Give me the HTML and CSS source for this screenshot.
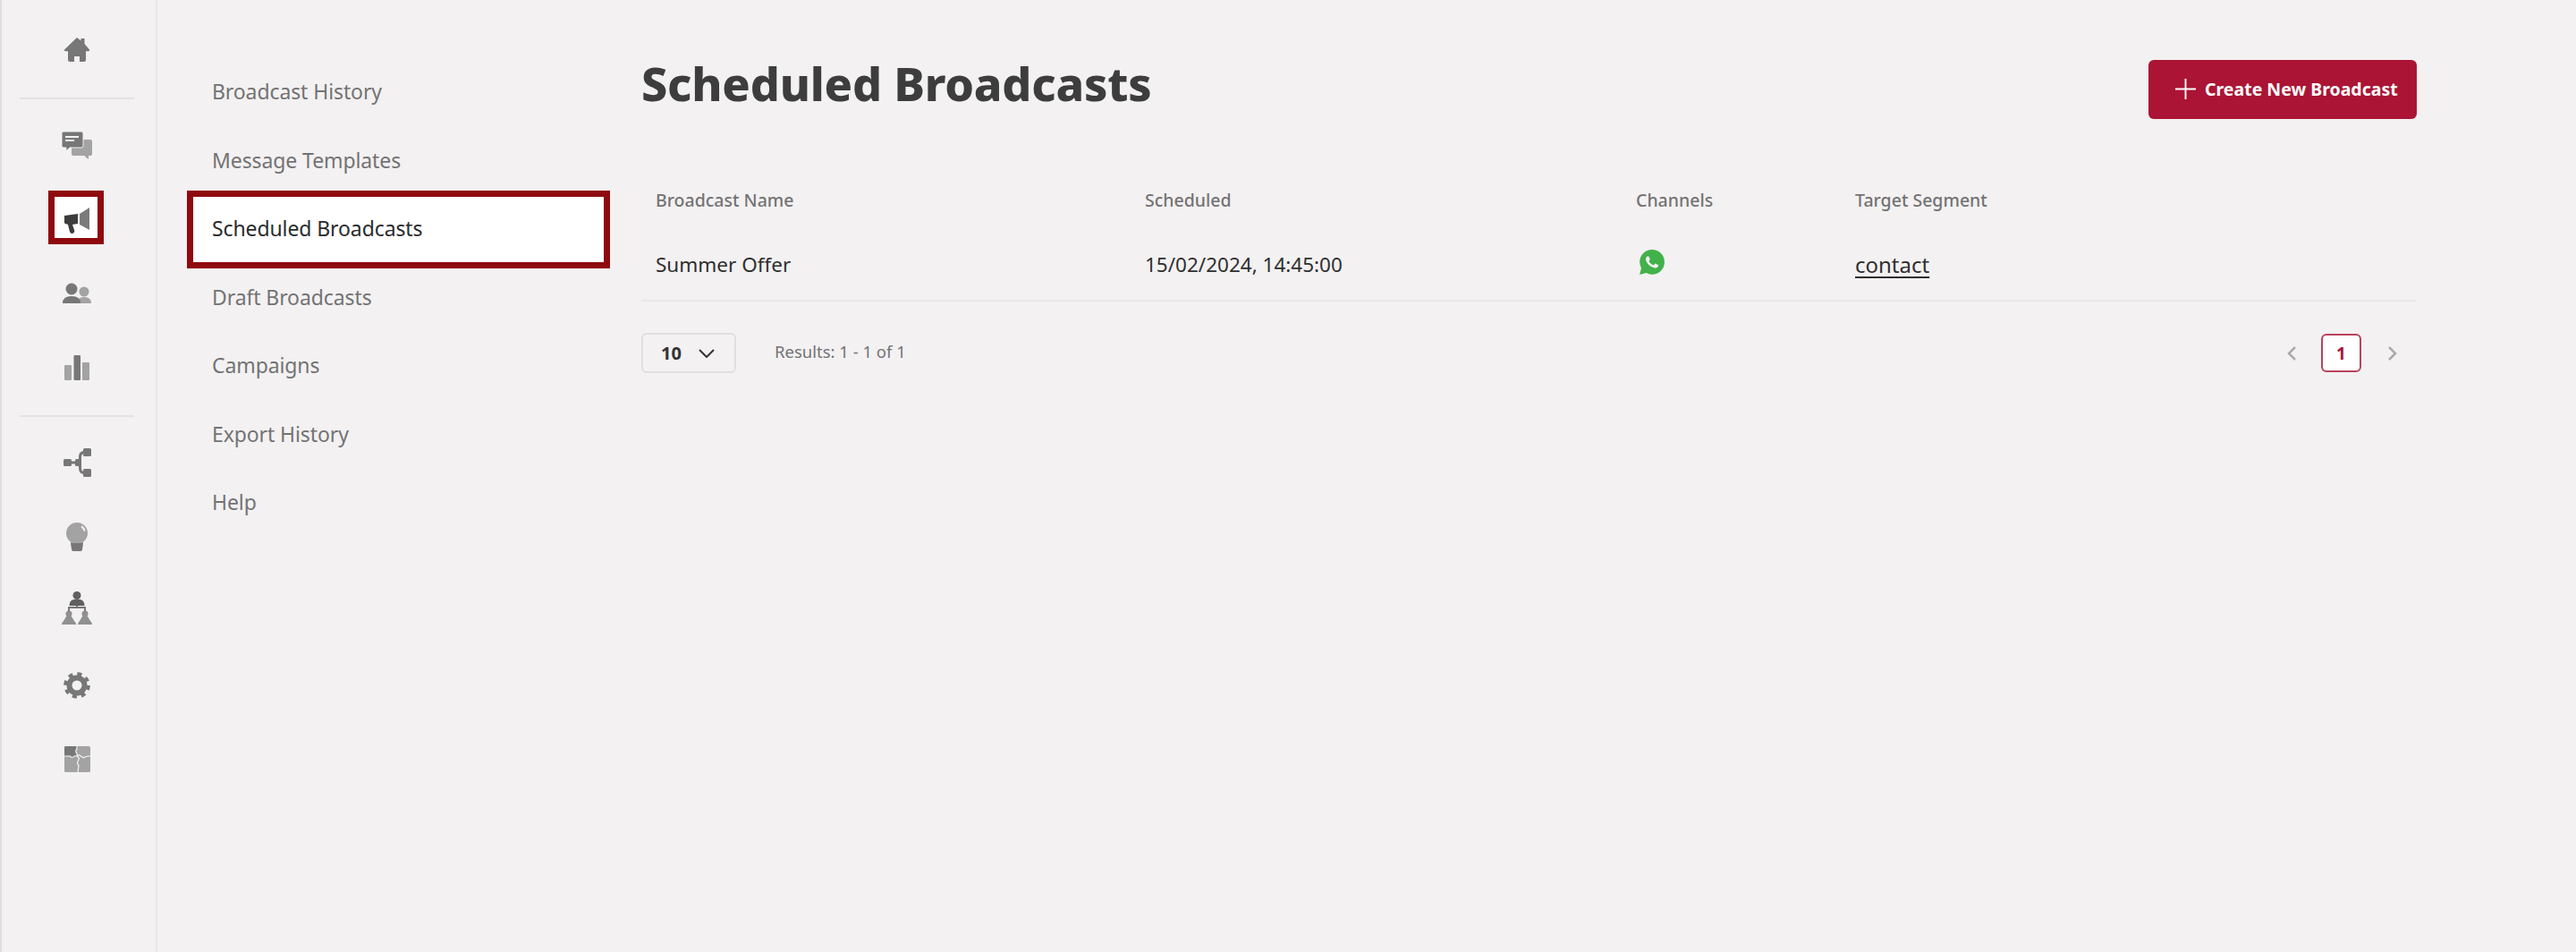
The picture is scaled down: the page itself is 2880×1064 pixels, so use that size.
FILE: index.html
```html
<!DOCTYPE html>
<html lang="en">
<head>
  <meta charset="UTF-8">
  <meta name="viewport" content="width=device-width, initial-scale=1.0">
  <title>Scheduled Broadcasts</title>
  <link rel="stylesheet" href="styles.css">
</head>
<body>
  <!-- icon rail -->
  <aside class="rail">
    <div class="rail-item">
      <svg class="icon" viewBox="0 0 36 40"><path class="i-mid" d="M18 6l4.500 3.500V7h4v6l5.500 6.500q.8 1.700-1.500 1.700H28V31q0 2-2 2h-5v-6h-6v6h-5q-2 0-2-2V21.200H5.500q-2.300 0-1.500-1.700z"/></svg>
    </div>
    <div class="rail-rule"></div>
    <div class="rail-item">
      <svg class="icon" viewBox="0 0 36 40">
        <path class="i-light" d="M14 14h19q2 0 2 2v14q0 2-2 2h-2v4l-5-4H14q-2 0-2-2V16q0-2 2-2z"/>
        <path class="i-mid i-edge" d="M3 5h20q2 0 2 2v14q0 2-2 2H10l-4 4v-4H3q-2 0-2-2V7q0-2 2-2z"/>
        <path class="i-cut" d="M5 11h15M5 15h10"/>
      </svg>
    </div>
    <div class="rail-item">
      <span class="icon-box">
        <svg class="icon" viewBox="0 0 36 40">
          <path class="i-horn" d="M22 16l11-7v25l-11-6z"/>
          <path class="i-dark" d="M5 18l15-2v11l-6 1 2 6q1 3-2 4-2 .5-3-2l-2-8-4-1.500z"/>
        </svg>
      </span>
    </div>
    <div class="rail-item">
      <svg class="icon" viewBox="0 0 36 40">
        <circle class="i-light" cx="26" cy="18" r="5.500"/>
        <path class="i-light" d="M18 31q0-7 8-7 8 0 8 7z"/>
        <circle class="i-mid" cx="12" cy="15" r="6.500"/>
        <path class="i-mid" d="M2 31q0-8 10-8 10 0 10 8z"/>
      </svg>
    </div>
    <div class="rail-item">
      <svg class="icon" viewBox="0 0 36 40">
        <rect class="i-light" x="4" y="17" width="8" height="17" rx="1"/>
        <rect class="i-mid" x="14.500" y="6" width="7.500" height="28" rx="1"/>
        <rect class="i-light" x="24" y="14" width="8" height="20" rx="1"/>
      </svg>
    </div>
    <div class="rail-rule"></div>
    <div class="rail-item">
      <svg class="icon" viewBox="0 0 36 40">
        <path class="i-link" d="M10 20h11M20 20q1.500-.5 1.500-3v-3q0-5 4-5.500M20 20q1.500.5 1.500 3v3q0 5 4 5.500"/>
        <rect class="i-mid" x="3" y="16" width="9" height="8" rx="1.500"/>
        <rect class="i-mid" x="16" y="16" width="7" height="8" rx="1.500"/>
        <rect class="i-mid" x="25" y="4" width="9" height="9" rx="1.500"/>
        <rect class="i-mid" x="25" y="27" width="9" height="9" rx="1.500"/>
      </svg>
    </div>
    <div class="rail-item">
      <svg class="icon" viewBox="0 0 36 40">
        <path class="i-light" d="M18 4a12 12 0 0 1 7 21.800V28H11v-2.200A12 12 0 0 1 18 4z"/>
        <path class="i-mid" d="M11 27h14l-1 7q0 2-2 2h-8q-2 0-2-2z"/>
        <path class="i-cut" d="M23 8.500q3 1.500 3.500 5"/>
      </svg>
    </div>
    <div class="rail-item">
      <svg class="icon icon-up" viewBox="0 0 36 40">
        <circle class="i-dark2" cx="18" cy="4.500" r="4.500"/>
        <path class="i-dark2" d="M9.500 16q0-6 5-7h7q5 1 5 7z"/>
        <path class="i-line" d="M18 16v2M9 23v-5h18v5"/>
        <circle class="i-light2" cx="9" cy="25" r="3.500"/>
        <path class="i-light2" d="M1 37q0-2 2-4l3-5h6l3 5q2 2 2 4z"/>
        <circle class="i-light2" cx="27" cy="25" r="3.500"/>
        <path class="i-light2" d="M19 37q0-2 2-4l3-5h6l3 5q2 2 2 4z"/>
      </svg>
    </div>
    <div class="rail-item">
      <svg class="icon" viewBox="0 0 36 40">
        <circle class="i-gear" cx="18" cy="20" r="8.500"/>
        <circle class="i-teeth" cx="18" cy="20" r="12.800"/>
      </svg>
    </div>
    <div class="rail-item">
      <svg class="icon" viewBox="0 0 36 40">
        <rect class="i-light" x="4" y="5" width="29" height="29" rx="1.500"/>
        <path class="i-mid" d="M4 6.500Q4 5 5.500 5H18v3q-2.500 3 0 5v3h-3q-2 3-5 0H4z"/>
        <path class="i-seam" d="M18 5v3q-2.500 3 0 5v3q3 1.500 2 4l-1 2q-1.500 2.500 1 4.500l-1 7.500M4 16h6q3 3 5 0h3q2-2.500 5 .5 2.500 2.500 5 0l5-.5"/>
      </svg>
    </div>
  </aside>

  <!-- section menu -->
  <nav class="menu">
    <a class="menu-item">Broadcast History</a>
    <a class="menu-item">Message Templates</a>
    <a class="menu-item active">Scheduled Broadcasts</a>
    <a class="menu-item">Draft Broadcasts</a>
    <a class="menu-item">Campaigns</a>
    <a class="menu-item">Export History</a>
    <a class="menu-item">Help</a>
  </nav>

  <main class="content">
    <div class="page-head">
      <h1>Scheduled Broadcasts</h1>
      <button class="btn-create">
        <svg class="btn-plus" viewBox="0 0 24 24"><path d="M12 0v24M0 12h24"/></svg>
        Create New Broadcast
      </button>
    </div>

    <table class="list">
      <colgroup>
        <col class="col-name">
        <col class="col-date">
        <col class="col-channel">
        <col>
      </colgroup>
      <thead>
        <tr>
          <th>Broadcast Name</th>
          <th>Scheduled</th>
          <th>Channels</th>
          <th>Target Segment</th>
        </tr>
      </thead>
      <tbody>
        <tr>
          <td>Summer Offer</td>
          <td>15/02/2024, 14:45:00</td>
          <td>
            <svg class="whatsapp" viewBox="0 0 24 24">
              <path class="wa-bubble" d="M.057 24l1.688-6.163A11.87 11.87 0 01.157 11.892C.16 5.335 5.495 0 12.050 0c3.180 0 6.166 1.240 8.413 3.488a11.821 11.821 0 013.480 8.413c-.003 6.558-5.339 11.893-11.893 11.893h-.005a11.882 11.882 0 01-5.683-1.448z"/>
              <path class="wa-phone" d="M17.472 14.382c-.297-.149-1.758-.867-2.030-.967-.273-.099-.471-.148-.670.150-.197.297-.767.966-.940 1.164-.173.199-.347.223-.644.075-.297-.150-1.255-.463-2.390-1.475-.883-.788-1.480-1.761-1.653-2.059-.173-.297-.018-.458.130-.606.134-.133.298-.347.446-.520.149-.174.198-.298.298-.497.099-.198.050-.371-.025-.520-.075-.149-.669-1.612-.916-2.207-.242-.579-.487-.500-.669-.510-.173-.008-.371-.010-.570-.010-.198 0-.520.074-.792.372-.272.297-1.040 1.016-1.040 2.479 0 1.462 1.065 2.875 1.213 3.074.149.198 2.096 3.200 5.077 4.487.709.306 1.262.489 1.694.625.712.227 1.360.195 1.871.118.571-.085 1.758-.719 2.006-1.413.248-.694.248-1.289.173-1.413-.074-.124-.272-.198-.570-.347z"/>
            </svg>
          </td>
          <td><a class="segment">contact</a></td>
        </tr>
      </tbody>
    </table>

    <div class="list-foot">
      <div class="page-size">
        <span>10</span>
        <svg class="chev" viewBox="0 0 18 10"><path d="M1 1l8 8 8-8"/></svg>
      </div>
      <span class="results">Results: 1 - 1 of 1</span>
      <div class="pager">
        <svg class="pager-arrow" viewBox="0 0 10 16"><path d="M9 1L2 8l7 7"/></svg>
        <span class="pager-num">1</span>
        <svg class="pager-arrow" viewBox="0 0 10 16"><path d="M1 1l7 7-7 7"/></svg>
      </div>
    </div>
  </main>
</body>
</html>
```

FILE: styles.css
```css
body {
  font-family: 'Noto Sans', 'Open Sans', Arial, sans-serif;
  margin: 0;
  height: 1064px;
  display: flex;
  background-color: #f3f1f2;
  color: #333;
  overflow: hidden;
}

/* icon rail */
.rail {
  width: 176px;
  flex: none;
  box-sizing: border-box;
  border-left: 2px solid #dfdddf;
  border-right: 2px solid #e8e6e7;
  padding: 14px 24px 0 20px;
}

.rail-item {
  height: 83px;
  display: flex;
  align-items: center;
  justify-content: center;
}

.rail-rule {
  height: 2px;
  background-color: #e4e2e3;
  margin: 12px 0 9px;
}

.icon {
  width: 36px;
  height: 40px;
}

.icon-up {
  margin-bottom: 4px;
}

.icon-box {
  width: 48px;
  height: 46px;
  display: flex;
  align-items: center;
  justify-content: center;
  background-color: #fff;
  outline: 7px solid #8f0a0e;
  margin: -3px 2px 0 0;
}

.i-dark { fill: #3c3c3c; }
.i-dark2 { fill: #5f5f5f; }
.i-mid { fill: #777; }
.i-horn { fill: #7b7b7b; }
.i-light { fill: #a3a3a3; }
.i-light2 { fill: #909090; }
.i-edge { stroke: #f3f1f2; stroke-width: 1; }
.i-cut { fill: none; stroke: #f3f1f2; stroke-width: 2; }
.i-line { fill: none; stroke: #777; stroke-width: 2; }
.i-link { fill: none; stroke: #777; stroke-width: 3; }
.i-gear { fill: none; stroke: #777; stroke-width: 6; }
.i-teeth { fill: none; stroke: #777; stroke-width: 4; stroke-dasharray: 5 5.050; }
.i-seam { fill: none; stroke: #f3f1f2; stroke-width: 1.200; }

/* section menu */
.menu {
  width: 459px;
  flex: none;
  margin-left: 40px;
  padding-top: 67px;
  display: flex;
  flex-direction: column;
  gap: 4px;
}

.menu-item {
  height: 72.500px;
  box-sizing: border-box;
  display: flex;
  align-items: center;
  padding: 0 0 2px 21px;
  font-size: 23px;
  letter-spacing: -0.1px;
  color: #737373;
}

.menu-item.active {
  background-color: #fff;
  color: #2b2b2b;
  outline: 7px solid #8f0a0e;
}

/* main */
.content {
  width: 1985px;
  flex: none;
  margin-left: 42px;
  padding-top: 67px;
}

.page-head {
  height: 66px;
  display: flex;
  align-items: center;
  justify-content: space-between;
}

h1 {
  margin: 0;
  padding-bottom: 16px;
  font-size: 52px;
  font-weight: 800;
  letter-spacing: -0.2px;
  color: #3d3d3d;
}

.btn-create {
  width: 300px;
  height: 66px;
  display: flex;
  align-items: center;
  gap: 10px;
  padding: 0 0 2px 30px;
  border: none;
  border-radius: 6px;
  background-color: #ab1434;
  color: #fff;
  font-family: inherit;
  font-size: 19.500px;
  font-weight: 700;
}

.btn-plus {
  width: 23px;
  height: 23px;
  fill: none;
  stroke: #fff;
  stroke-width: 2;
}

.list {
  width: 100%;
  margin-top: 52px;
  border-collapse: collapse;
  table-layout: fixed;
}

.col-name { width: 547px; }
.col-date { width: 549px; }
.col-channel { width: 245px; }

.list th {
  height: 76px;
  padding: 0 16px;
  text-align: left;
  font-size: 19.500px;
  font-weight: 500;
  color: #737373;
}

.list td {
  height: 75px;
  padding: 0 16px 6px;
  box-sizing: border-box;
  font-size: 22.500px;
  color: #2f2f2f;
  border-bottom: 2px solid #e9e7e8;
}

.whatsapp {
  display: block;
  width: 28px;
  height: 28px;
  margin: 0 0 4px 4px;
}

.wa-bubble { fill: #43b14b; }
.wa-phone { fill: #f3f1f2; }

.segment {
  font-size: 24px;
  text-decoration: underline;
  text-underline-offset: 4px;
}

.list-foot {
  margin-top: 35px;
  display: flex;
  align-items: center;
}

.page-size {
  width: 106px;
  height: 45px;
  box-sizing: border-box;
  display: flex;
  align-items: center;
  justify-content: space-between;
  padding: 0 22px 0 20px;
  border: 2px solid #e0dee0;
  border-radius: 6px;
  font-size: 20px;
  font-weight: 700;
  color: #333;
}

.chev {
  width: 18px;
  height: 10px;
  fill: none;
  stroke: #333;
  stroke-width: 2;
}

.results {
  margin-left: 43px;
  padding-bottom: 5px;
  font-size: 18.500px;
  color: #737373;
}

.pager {
  margin-left: auto;
  margin-right: 22px;
  display: flex;
  align-items: center;
  gap: 28px;
}

.pager-arrow {
  width: 10px;
  height: 16px;
  fill: none;
  stroke: #aaa;
  stroke-width: 2.500;
}

.pager-num {
  width: 45px;
  height: 43px;
  box-sizing: border-box;
  display: flex;
  align-items: center;
  justify-content: center;
  margin-right: 2px;
  background-color: #fff;
  border: 2px solid #b8435c;
  border-radius: 6px;
  font-size: 19px;
  font-weight: 700;
  color: #ab1434;
}
```
